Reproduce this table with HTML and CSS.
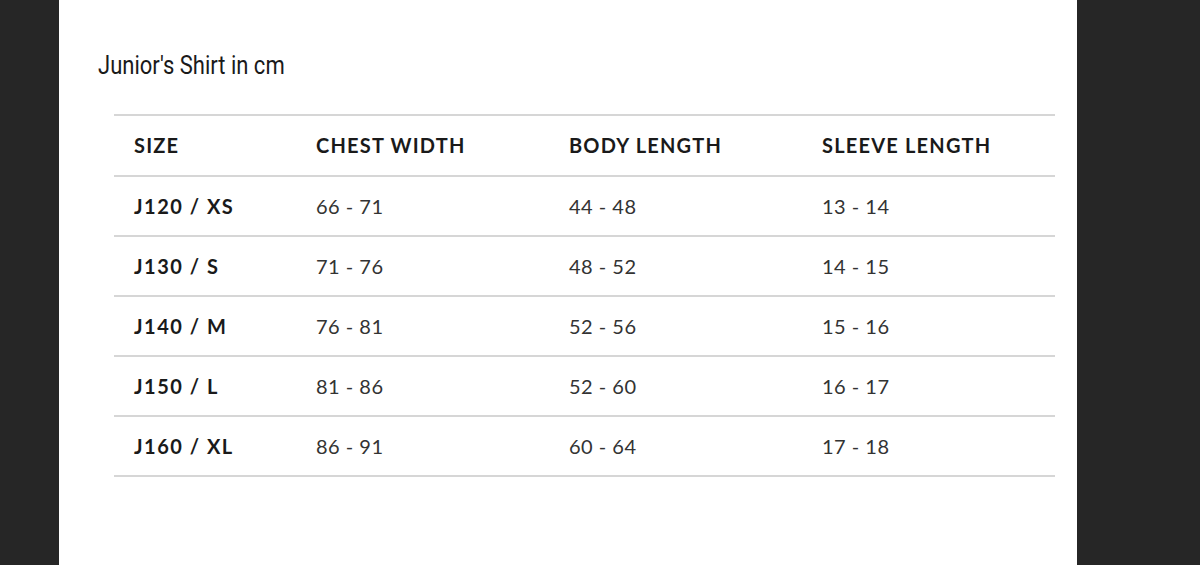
FILE: index.html
```html
<!DOCTYPE html>
<html>
<head>
<meta charset="utf-8">
<link rel="stylesheet" href="styles.css">
</head>
<body>
<div class="panel">
  <h1 class="title"><span class="title-text">Junior's Shirt in cm</span></h1>
  <table class="sizes">
    <thead>
      <tr><th>SIZE</th><th>CHEST WIDTH</th><th>BODY LENGTH</th><th>SLEEVE LENGTH</th></tr>
    </thead>
    <tbody>
      <tr><td class="sz">J120 / XS</td><td>66 - 71</td><td>44 - 48</td><td>13 - 14</td></tr>
      <tr><td class="sz">J130 / S</td><td>71 - 76</td><td>48 - 52</td><td>14 - 15</td></tr>
      <tr><td class="sz">J140 / M</td><td>76 - 81</td><td>52 - 56</td><td>15 - 16</td></tr>
      <tr><td class="sz">J150 / L</td><td>81 - 86</td><td>52 - 60</td><td>16 - 17</td></tr>
      <tr><td class="sz">J160 / XL</td><td>86 - 91</td><td>60 - 64</td><td>17 - 18</td></tr>
    </tbody>
  </table>
</div>
</body>
</html>
```
FILE: styles.css
```css
html, body {
  margin: 0;
  padding: 0;
  background: #262626;
  height: 565px;
  overflow: hidden;
}
.panel {
  margin-left: 59px;
  width: 1018px;
  height: 565px;
  background: #ffffff;
  padding-top: 51px;
  box-sizing: border-box;
}
.title {
  margin: 0 0 0 39px;
  font-family: "Roboto", "Liberation Sans", sans-serif;
  font-weight: 400;
  font-size: 25px;
  line-height: 30px;
  color: #1a1a1a;
}
.title-text {
  display: inline-block;
  transform: scaleX(0.88);
  transform-origin: left center;
}
.sizes {
  margin: 33px 0 0 55px;
  width: 941px;
  border-collapse: collapse;
  table-layout: fixed;
  font-family: "Lato", "Noto Sans", sans-serif;
  font-size: 20px;
  color: #1a1a1a;
}
.sizes th, .sizes td {
  height: 58px;
  padding: 0 0 0 20px;
  text-align: left;
  border-top: 2px solid #d6d6d6;
  border-bottom: 2px solid #d6d6d6;
  vertical-align: middle;
}
.sizes th {
  font-weight: 700;
  letter-spacing: 1.2px;
  padding-bottom: 1px;
}
.sizes th:first-child, .sizes td:first-child { width: 162px; }
.sizes td { font-weight: 400; color: #333; letter-spacing: 0.5px; }
.sizes td.sz { font-weight: 700; color: #1a1a1a; letter-spacing: 1.5px; }
```
